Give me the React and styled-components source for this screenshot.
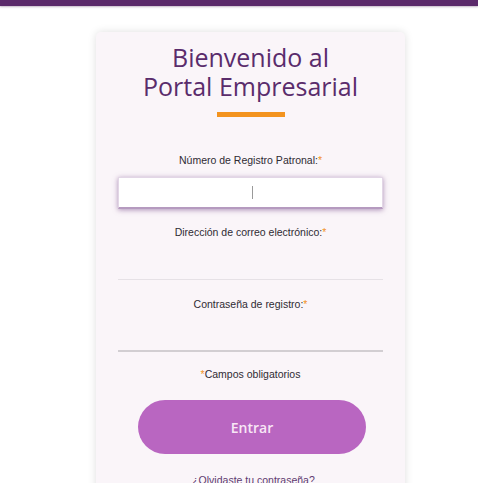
import React from "react";
import styled, { createGlobalStyle } from "styled-components";

const Global = createGlobalStyle`
  html, body { margin: 0; padding: 0; background: #ffffff; overflow: hidden; }
  body { font-family: "Open Sans", "Noto Sans", sans-serif; }
`;

const TopBar = styled.div`
  height: 6px;
  background: #5b2a6b;
  box-shadow: 0 1px 2px rgba(60, 20, 70, 0.3);
`;

const Page = styled.div`
  display: flex;
  padding: 26px 0 0 96px;
`;

const Card = styled.div`
  width: 309px;
  box-sizing: border-box;
  background: #faf5f9;
  border-radius: 5px;
  box-shadow: 0 0 9px rgba(0, 0, 0, 0.13);
  padding: 11px 22px 40px 22px;
  display: flex;
  flex-direction: column;
  align-items: stretch;
`;

const Title = styled.h1`
  margin: 0;
  font-family: "Open Sans", sans-serif;
  font-weight: 500;
  font-size: 25px;
  line-height: 29px;
  color: #5a2c6c;
  text-align: center;
`;

const Accent = styled.div`
  width: 68px;
  height: 5px;
  background: #f3931f;
  align-self: center;
  margin-top: 11px;
  margin-bottom: 36px;
`;

const Field = styled.div`
  display: flex;
  flex-direction: column;
  gap: ${(p) => p.$gap}px;
  margin-bottom: ${(p) => p.$mb}px;
`;

const Label = styled.label`
  font-family: "Liberation Sans", Arial, sans-serif;
  font-size: 10.5px;
  line-height: 14px;
  color: #2f2b33;
  text-align: center;
`;

const Star = styled.span`
  color: #f3931f;
`;

const InputWrap = styled.div`
  position: relative;
  height: 32px;
  box-sizing: border-box;
  ${(p) =>
    p.$focused
      ? `
    background: #ffffff;
    border: 1px solid #e2d6e6;
    border-bottom: 2px solid #b59abf;
    box-shadow: 0 1px 5px rgba(110, 60, 130, 0.55);
  `
      : `
    background: transparent;
    border-bottom: ${p.$dark ? "2px solid #d2ced2" : "1px solid #e6e1e6"};
  `}
`;

const Input = styled.input`
  width: 100%;
  height: 100%;
  box-sizing: border-box;
  border: none;
  outline: none;
  background: transparent;
  text-align: center;
  font-family: "Open Sans", sans-serif;
  font-size: 12px;
`;

const Caret = styled.span`
  position: absolute;
  left: 133px;
  top: 8px;
  width: 1px;
  height: 13px;
  background: #9a9a9a;
`;

const Required = styled.div`
  font-family: "Liberation Sans", Arial, sans-serif;
  font-size: 10.5px;
  line-height: 14px;
  color: #2f2b33;
  text-align: center;
  margin-top: 15px;
`;

const Button = styled.button`
  align-self: center;
  margin-top: 19px;
  width: 228px;
  height: 54px;
  border: none;
  border-radius: 27px;
  background: #b966c1;
  color: #f8e6f6;
  font-family: "Open Sans", sans-serif;
  font-weight: 600;
  font-size: 14px;
  cursor: pointer;
  margin-left: 3px;
`;

const Forgot = styled.a`
  margin-top: 19px;
  font-family: "Liberation Sans", Arial, sans-serif;
  font-size: 10.5px;
  line-height: 14px;
  color: #5e3a70;
  text-align: center;
  text-decoration: none;
  padding-left: 6px;
`;

export default function App() {
  return (
    <>
      <Global />
      <TopBar />
      <Page>
        <Card>
          <Title>
            Bienvenido al
            <br />
            Portal Empresarial
          </Title>
          <Accent />
          <Field $gap={10} $mb={16}>
            <Label>
              Número de Registro Patronal:<Star>*</Star>
            </Label>
            <InputWrap $focused>
              <Input type="text" />
              <Caret />
            </InputWrap>
          </Field>
          <Field $gap={9} $mb={17}>
            <Label>
              Dirección de correo electrónico:<Star>*</Star>
            </Label>
            <InputWrap>
              <Input type="email" />
            </InputWrap>
          </Field>
          <Field $gap={9} $mb={0}>
            <Label>
              Contraseña de registro:<Star>*</Star>
            </Label>
            <InputWrap $dark>
              <Input type="password" />
            </InputWrap>
          </Field>
          <Required>
            <Star>*</Star>Campos obligatorios
          </Required>
          <Button>Entrar</Button>
          <Forgot href="#">¿Olvidaste tu contraseña?</Forgot>
        </Card>
      </Page>
    </>
  );
}
